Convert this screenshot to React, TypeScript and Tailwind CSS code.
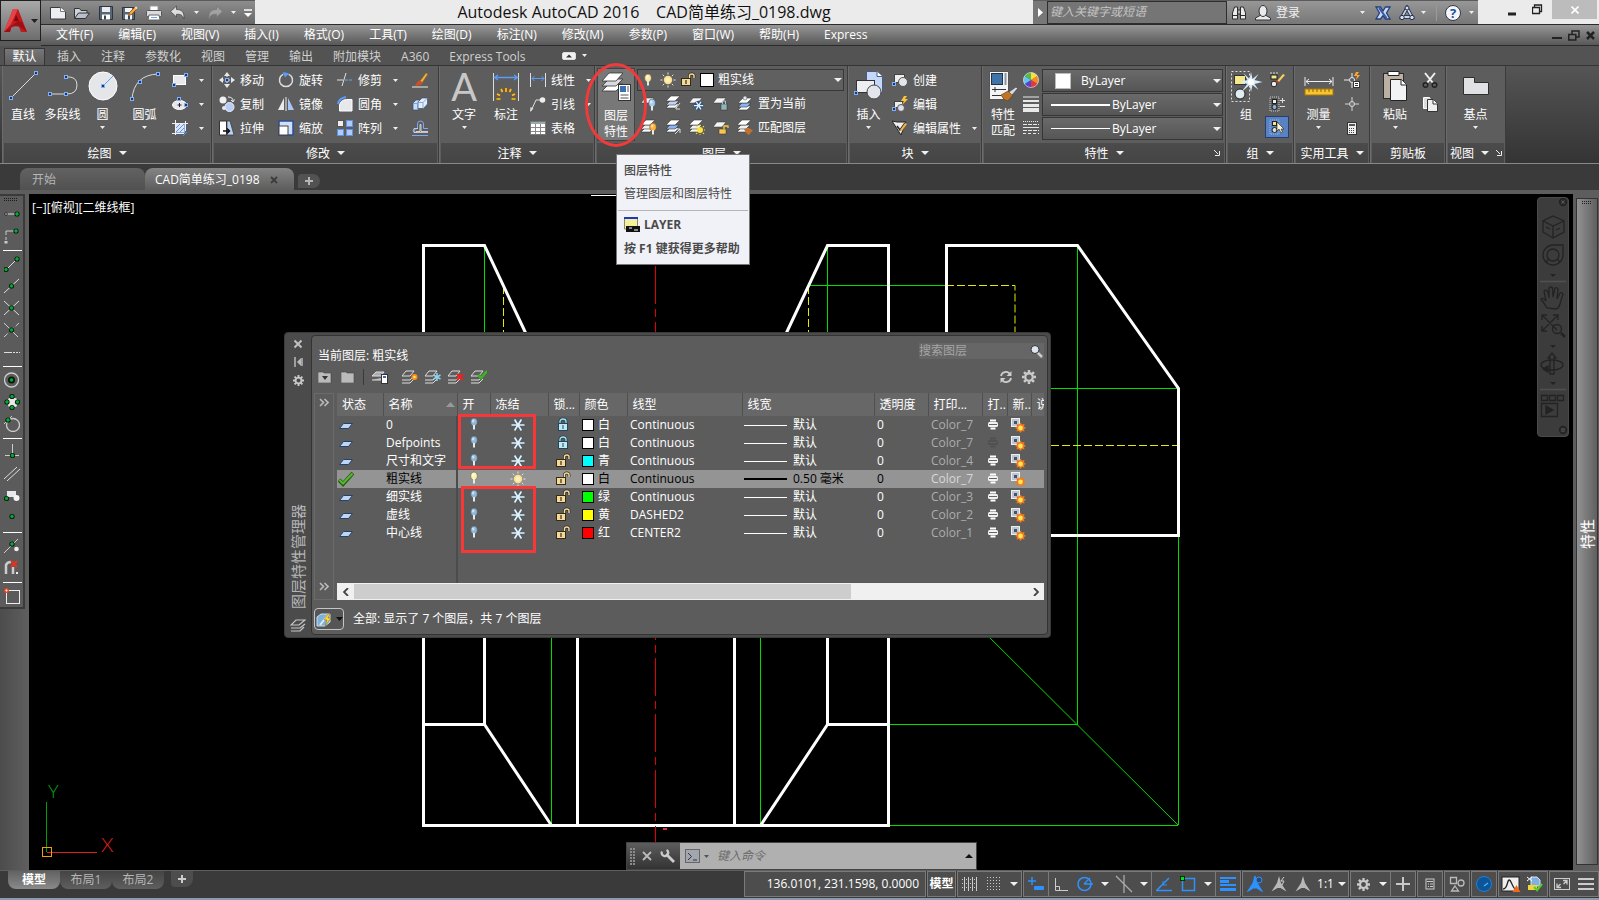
import { ReactNode } from "react";
import clsx from "clsx";

type SvgProps = {
  w?: number,
  h?: number,
  className?: string,
  children: ReactNode,
}

const Svg = ({ w = 16, h = 16, className, children }: SvgProps) => (
  <svg width={w} height={h} viewBox={`0 0 ${w} ${h}`} className={clsx("shrink-0", className)} fill="none" aria-hidden="true">
    {children}
  </svg>
);

const Caret = ({ className, small = false }: { className?: string, small?: boolean }) => (
  small
    ? <Svg w={5} h={3} className={className}><path d="M0 0h5L2.5 3z" fill="#eee" /></Svg>
    : <Svg w={8} h={4} className={className}><path d="M0 0h8L4 4z" fill="#f0f0f0" /></Svg>
);

// Small blue grip square
const Grip = ({ x, y }: { x: number, y: number }) => (
  <rect x={x - 1.5} y={y - 1.5} width="3" height="3" fill="#2a3550" stroke="#7fb0ff" />
);

// Green object snap marker
const Snap = ({ x, y }: { x: number, y: number }) => (
  <>
    <circle cx={x} cy={y} r="2.6" fill="#001a08" />
    <circle cx={x} cy={y} r="1.4" fill="#0a3" stroke="#10b040" strokeWidth=".6" />
  </>
);

const Stack = ({ x = 0, y = 0, fill = "#f0f0f0" }: { x?: number, y?: number, fill?: string }) => (
  <g transform={`translate(${x} ${y})`} stroke="#3a3a3a" strokeWidth=".6">
    <path d="M0 13h9l4-4H4z" fill="#fafafa" />
    <path d="M0 10h9l4-4H4z" fill={fill} />
    <path d="M0 6h9l5-5H5z" fill="#fff" />
  </g>
);

const Sheet = ({ fill = "#f4f4f4" }: { fill?: string }) => (
  <path d="M0 8h9l4-5H4z" fill={fill} stroke="#333" strokeWidth=".5" />
);

const Bulb = ({ x, y, fill }: { x: number, y: number, fill: string }) => (
  <g transform={`translate(${x} ${y})`}>
    <ellipse rx="3.4" ry="4" fill={fill} stroke="#444" strokeWidth=".5" />
    <ellipse cx="-.8" cy="-1" rx="1.2" ry="1.6" fill="#fff" opacity=".6" />
    <path d="M-1 3h2v4.500h-2z" fill="#e8e8e8" />
  </g>
);

const flakePath = "M1.500 8h13M4.600 2.500l6.800 11M11.400 2.500l-6.800 11";
const raysPath = "M8 .5v2M8 13.5v2M.5 8h2M13.5 8h2M2.7 2.7l1.5 1.5M11.8 11.8l1.5 1.5M2.7 13.3l1.5-1.5M11.8 4.2l1.5-1.5";

const Flake = () => (
  <Svg>
    <path d={flakePath} stroke="#3f5c70" strokeWidth="3" opacity=".5" />
    <path d={flakePath} stroke="#dff2fd" strokeWidth="1.700" />
  </Svg>
);

const Sun = () => (
  <Svg>
    <circle cx="8" cy="8" r="4.2" fill="#ffe08a" />
    <circle cx="8" cy="8" r="2.5" fill="#fff0bf" />
    <path d={raysPath} stroke="#ece6d0" />
  </Svg>
);

const LockOpen = () => (
  <Svg>
    <path d="M9.5 7V4q0-2 2.3-2T14 4v2" stroke="#332b18" strokeWidth="2.8" />
    <path d="M9.5 7V4q0-2 2.3-2T14 4v2" stroke="#f7dfa6" strokeWidth="1.4" />
    <rect x="1.5" y="6.5" width="9" height="7" fill="#f5d99a" stroke="#332b18" />
    <path d="M6 8v4" stroke="#332b18" strokeWidth="1.2" />
  </Svg>
);

const LockClosed = () => (
  <Svg>
    <path d="M5 7V4.500q0-2.500 3-2.500t3 2.500V7" stroke="#204858" strokeWidth="3" />
    <path d="M5 7V4.500q0-2.500 3-2.500t3 2.500V7" stroke="#a8dcec" strokeWidth="1.300" />
    <rect x="3.500" y="6.500" width="9" height="7" fill="#bfe9f5" stroke="#204858" />
    <path d="M8 8v4" stroke="#204858" />
  </Svg>
);

type ButtonProps = {
  icon: ReactNode,
  label: string,
  className: string,
  second?: string,
  arrow?: boolean,
}

const BigButton = ({ icon, label, second, arrow, className }: ButtonProps) => (
  <button className={clsx("flex flex-col items-center h-[73px] mt-0.5 shrink-0", className)}>
    <span className="h-9 flex items-center justify-center">{icon}</span>
    <span className={second ? "leading-[17px] pt-0.5" : "leading-[22px]"}>{label}</span>
    {second && <span className="leading-4">{second}</span>}
    {arrow && <Caret small />}
  </button>
);

const SmallButton = ({ icon, label, arrow }: { icon: ReactNode, label?: string, arrow?: boolean }) => (
  <button className="flex items-center h-6 gap-[5px] whitespace-nowrap" aria-label={label ? undefined : "tool"}>
    {icon}
    {label && <span className="pt-0.5">{label}</span>}
    {arrow && <Caret small className="ml-1.5" />}
  </button>
);

const Column = ({ className, children }: { className?: string, children: ReactNode }) => (
  <div className={clsx("flex flex-col pt-0.5 shrink-0", className)}>{children}</div>
);

type PanelProps = {
  title: string,
  className: string,
  arrow?: boolean,
  launcher?: boolean,
  children: ReactNode,
}

const Panel = ({ title, className, arrow = true, launcher, children }: PanelProps) => (
  <section className={clsx("flex flex-col shrink-0 bg-[#5d5d5d] border-l border-l-[#6c6c6c] border-r border-r-[#3c3c3c]", className)}>
    <div className="flex h-[79px]">{children}</div>
    <div className="flex flex-1 items-center justify-center gap-[7px] bg-linear-to-b from-[#4b4b4b] to-[#454545] mx-px relative">
      <span className="pt-0.5">{title}</span>
      {arrow && <Caret />}
      {launcher && (
        <Svg w={6} h={6} className={title === "视图" ? "ml-0" : "absolute right-1"}>
          <path d="M0 0l4 4M5.500 1v4.500H1" stroke="#eee" />
        </Svg>
      )}
    </div>
  </section>
);

/* ---------- Title bar ---------- */

const Divider = () => <span className="w-px h-4 bg-[#9a9a9a]" />;

const QuickAccess = () => (
  <div className="flex items-center w-[214px] pl-[9px] shrink-0 bg-linear-to-b from-[#8d8d8d] to-[#686868] border-t border-[#5b5b5b]">
    <button aria-label="新建" className="mr-2"><Svg>
      <path d="M.5 2.500h10l5 4v7.500H.5z" fill="#eceef2" stroke="#3b3b3b" /><path d="M10.500 2.500v4h5" fill="#fff" stroke="#777" />
    </Svg></button>
    <button aria-label="打开" className="mr-2"><Svg>
      <path d="M.5 13V3.500h5l1.500 2h6V8" fill="#cfd4dc" stroke="#333" /><path d="M.5 13.500l4-5.500H15.500l-4 5.500z" fill="#b9c0cb" stroke="#333" />
    </Svg></button>
    <button aria-label="保存" className="mr-2"><Svg>
      <path d="M1.500 1.500h13v13h-13z" fill="#5b6675" stroke="#2c3440" /><path d="M4 2h8v5H4z" fill="#e8ebef" /><path d="M4 9.500h8v5H4z" fill="#fff" /><path d="M6 10.500h2v4H6z" fill="#3a4350" />
    </Svg></button>
    <button aria-label="另存为" className="mr-2"><Svg>
      <path d="M.5 2.500h12v12H.5z" fill="#5b6675" stroke="#2c3440" /><path d="M3 3h7v4H3zM3 9.500h7v5H3z" fill="#f1f3f5" /><path d="M6 10.500h2v4H6z" fill="#3a4350" />
      <path d="M6.500 10.500l1-3 6-6 2 2-6 6z" fill="#f4a63a" stroke="#7b3d10" strokeWidth=".7" /><path d="M12.500 2.500l2 2 1.200-1.500-1.700-1.700z" fill="#e7e2da" />
    </Svg></button>
    <button aria-label="打印" className="mr-2"><Svg>
      <path d="M4 1h8v5H4z" fill="#fff" stroke="#999" /><rect x=".5" y="5.500" width="15" height="6" rx="1" fill="#d9dadd" stroke="#555" /><path d="M3 10h10l1 5H2z" fill="#fff" stroke="#666" /><path d="M5 12.500h6" stroke="#6ea3e8" />
    </Svg></button>
    <button aria-label="放弃" className="mr-2"><Svg>
      <path d="M.5 6.500L6.500 1v3.500c5 0 8 2 7.500 9.500-1.500-4-3.500-5-7.500-4.700V12z" fill="#dcdcdc" stroke="#4a4a4a" strokeWidth=".8" />
    </Svg></button>
    <Caret small className="mr-2" />
    <button aria-label="重做" className="mr-2"><Svg>
      <path d="M15.500 6.500L9.500 1v3.500c-5 0-8 2-7.500 9.500 1.500-4 3.500-5 7.500-4.700V12z" fill="#a2a2a2" stroke="#787878" strokeWidth=".8" />
    </Svg></button>
    <Caret small className="mr-2" />
    <Svg w={8} h={8}><path d="M0 1h8" stroke="#fff" strokeWidth="1.500" /><path d="M0 4h8L4 8z" fill="#fff" /></Svg>
  </div>
);

const InfoCenter = () => (
  <div className="flex items-stretch w-[445px] shrink-0 bg-linear-to-b from-[#979797] to-[#777] border-t border-[#5b5b5b]">
    <button aria-label="折叠" className="w-3.5 flex items-center justify-center bg-[#777]">
      <Svg w={5} h={9}><path d="M0 0l5 4.500L0 9z" fill="#fff" /></Svg>
    </button>
    <input
      aria-label="搜索"
      placeholder="键入关键字或短语"
      className="w-[180px] px-0.5 pb-0.5 leading-4 italic bg-[#757575] border border-[#2e2e2e] placeholder:text-[#c4c4c4] outline-none"
    />
    <div className="flex flex-1 items-center pl-1">
      <Svg w={16} h={16} className="mr-2">
        <path d="M3.500 2h3v12h-5V8zM12.500 2h-3v12h5V8z" fill="#ececec" stroke="#2c2c2c" /><path d="M6.500 5h3v4h-3zM1.500 10.500h5M9.500 10.500h5" fill="#aaa" stroke="#2c2c2c" />
      </Svg>
      <button className="flex items-center gap-[5px] text-[#f2f2f2]">
        <Svg w={16} h={16}>
          <path d="M.5 15v-2l4.500-2.500h6l4.500 2.500v2z" fill="#e8eaee" stroke="#333" /><ellipse cx="8" cy="6" rx="4" ry="5.500" fill="#e8eaee" stroke="#333" />
        </Svg>
        登录
      </button>
      <Caret small className="ml-auto mr-2.5" />
      <Svg w={16} h={16} className="mr-2">
        <path d="M1 2h4.500L8 6l2.500-4H15L11.500 8 15 14h-4.500L8 10.500 5.500 14H1l3.500-6z" fill="#c9d8f5" stroke="#24407c" strokeWidth="1.300" /><path d="M4 3l7.500 10" stroke="#36559c" strokeWidth="2" />
      </Svg>
      <Svg w={16} h={16} className="mr-1.5">
        <path d="M8 3l5 9H3z" stroke="#202c48" strokeWidth="3.500" /><path d="M8 3l5 9H3z" stroke="#c8d3ea" strokeWidth="1.800" />
        <g fill="#d5def0" stroke="#202c48"><circle cx="8" cy="3" r="2" /><circle cx="3" cy="12.500" r="2.200" /><circle cx="13" cy="12.500" r="2.200" /></g>
      </Svg>
      <Caret small className="mr-2.5" />
      <Divider />
      <button aria-label="帮助" className="ml-2 mr-2 size-4 rounded-full bg-[#f4f6fa] border border-[#33394a] text-[#1e4fa8] font-bold text-[13px] leading-[14px]">?</button>
      <Caret small className="mr-1" />
    </div>
  </div>
);

const menus = ["文件(F)", "编辑(E)", "视图(V)", "插入(I)", "格式(O)", "工具(T)", "绘图(D)", "标注(N)", "修改(M)", "参数(P)", "窗口(W)", "帮助(H)", "Express"];

const Header = () => (
  <header className="flex h-[46px] shrink-0 bg-[#555]">
    <div className="flex flex-col w-[41px] shrink-0 bg-[#5a5a5a]">
      <button aria-label="应用程序" className="h-[41px] w-[41px] flex items-center justify-center gap-0.5 border border-[#1f1f1f] bg-linear-to-b from-[#a9a9a9] to-[#6d6d6d]">
        <Svg w={26} h={28}>
          <path d="M10 2h5l9 23h-6l-2-5q-4-2-8 1l-1 4H1z" fill="#c0191e" />
          <path d="M10 2l5 0-7 15-7 8z" fill="#e2444a" />
          <path d="M1 25l14-11 4 1 5 10-8-6q-4-1-8 1l-1 5z" fill="#9e0f14" />
          <path d="M13 8l3 6h-5z" fill="#7e0a0e" />
        </Svg>
        <Svg w={7} h={4}><path d="M0 0h7L3.500 4z" fill="#222" /></Svg>
      </button>
    </div>
    <div className="flex flex-col flex-1 min-w-0">
      <div className="flex h-6 bg-[#ebebeb]">
        <QuickAccess />
        <h1 className="flex-1 text-center text-[16px] leading-[25px] text-[#111] whitespace-pre">{"Autodesk AutoCAD 2016    CAD简单练习_0198.dwg"}</h1>
        <InfoCenter />
        <div className="flex w-[121px] shrink-0 items-start">
          <button aria-label="最小化" className="w-[68px] h-5 pl-[30px] pt-2"><Svg w={8} h={4}><path d="M0 2h8" stroke="#222" strokeWidth="3" /></Svg></button>
          <button aria-label="还原" className="absolute right-[56px] top-1"><Svg w={11} h={11}><path d="M.5 3.500h7v6h-7zM2.500 3V1h7v6.500H8" stroke="#222" strokeWidth="1.300" /></Svg></button>
          <button aria-label="关闭" className="ml-1.5 w-[45px] h-[19px] bg-[#bcbcbc] flex items-center justify-center"><Svg w={8} h={8}><path d="M.5 .5l7 7M7.500 .5l-7 7" stroke="#fff" strokeWidth="1.600" /></Svg></button>
        </div>
      </div>
      <nav className="flex items-center h-[22px] pl-[15px] gap-[25px] border-t border-b border-[#2b2b2b] bg-linear-to-b from-[#979797] to-[#585858]">
        {menus.map((m) => <button key={m} className="whitespace-nowrap">{m}</button>)}
        <div className="ml-auto flex items-center gap-1.5 pr-1">
          <Svg w={10} h={10}><path d="M0 8h10" stroke="#222" strokeWidth="2" /></Svg>
          <Svg w={12} h={11}><path d="M.8 4.500h7v5.500h-7zM4 4V1h7v6H8" stroke="#222" strokeWidth="1.500" /></Svg>
          <Svg w={9} h={9}><path d="M1 1l7 7M8 1L1 8" stroke="#222" strokeWidth="2.500" /></Svg>
        </div>
      </nav>
    </div>
  </header>
);

/* ---------- Ribbon ---------- */

const ribbonTabs = ["插入", "注释", "参数化", "视图", "管理", "输出", "附加模块", "A360", "Express Tools"];

const RibbonTabs = () => (
  <div className="flex h-5 shrink-0 bg-[#535353] border-b border-[#353535] text-[#d0d0d0]">
    <button className="ml-1 mt-0.5 w-[41px] bg-linear-to-b from-[#777] to-[#5d5d5d] border border-b-0 border-[#353535] text-white leading-4">默认</button>
    <div className="flex items-center gap-5 pl-3 pt-0.5">
      {ribbonTabs.map((t) => <button key={t} className="whitespace-nowrap">{t}</button>)}
    </div>
    <button aria-label="最小化功能区" className="ml-9 flex items-center gap-1.5">
      <Svg w={14} h={8}><rect x=".5" y=".5" width="13" height="7" rx="1.500" fill="#f2f2f2" stroke="#ddd" /><path d="M4 5.500h6L7 2.500z" fill="#333" /></Svg>
      <Caret small />
    </button>
  </div>
);

const DrawPanel = () => (
  <Panel title="绘图" className="w-[210px] ml-0.5">
    <BigButton label="直线" className="w-[40px]" icon={<Svg w={30} h={30}><path d="M3 27L28 2" stroke="#dcdcdc" /><Grip x={3} y={27} /><Grip x={28} y={2} /></Svg>} />
    <BigButton label="多段线" className="w-[39px]" icon={<Svg w={32} h={30}><path d="M3 23h17q10 0 10-9T19 6" stroke="#dcdcdc" /><Grip x={3} y={23} /><Grip x={19} y={23} /><Grip x={19} y={6} /></Svg>} />
    <BigButton label="圆" arrow className="w-[41px]" icon={<Svg w={30} h={30}><circle cx="15" cy="15" r="14" fill="#e4e6ea" stroke="#fff" /><path d="M15 15L25 5" stroke="#5a9cf8" /><Grip x={15} y={15} /></Svg>} />
    <BigButton label="圆弧" arrow className="w-[43px]" icon={<Svg w={32} h={30}><path d="M3 28Q5 4 29 3" stroke="#dcdcdc" /><Grip x={3} y={28} /><Grip x={11} y={11} /><Grip x={29} y={3} /></Svg>} />
    <Column className="ml-1.5">
      <SmallButton arrow icon={<Svg><rect x="1.500" y="3.500" width="12" height="9" fill="#e6e8ec" stroke="#fff" /><Grip x={2} y={13} /><Grip x={14} y={3} /></Svg>} />
      <SmallButton arrow icon={<Svg><ellipse cx="7.500" cy="9" rx="7" ry="4.500" fill="#e6e8ec" stroke="#fff" /><path d="M7.500 7v4M5.500 9h4" stroke="#222" /><Grip x={7} y={3} /><Grip x={14} y={9} /></Svg>} />
      <SmallButton arrow icon={<Svg><rect x="3.500" y="3.500" width="9" height="9" fill="#dfe8f8" stroke="#7fb0ff" /><path d="M4 8l4-4M4 12l8-8M8 12l4-4M11 16l4-4" stroke="#5a90e8" /><path d="M0 3.500h16M3.500 0v15M0 13.500h12M13.500 1v10" stroke="#f0f0f0" /></Svg>} />
    </Column>
  </Panel>
);

const ModifyPanel = () => (
  <Panel title="修改" className="w-[227px]">
    <Column className="pl-1.5 w-[65px]">
      <SmallButton label="移动" icon={<Svg><path d="M8 0l3 4H5zM8 16l3-4H5zM0 8l4-3v6zM16 8l-4-3v6z" fill="#e8e8e8" /><path d="M8 3v10M3 8h10" stroke="#e8e8e8" strokeDasharray="2 1" /><Grip x={8} y={8} /></Svg>} />
      <SmallButton label="复制" icon={<Svg><circle cx="4" cy="4" r="3.500" fill="#eef0f4" /><circle cx="5" cy="12" r="2" fill="#e6e8ec" /><circle cx="10.500" cy="11" r="4.500" fill="#b8cdf4" stroke="#eef" /><path d="M9 1q5 0 5 4M12 4l2 2 1.500-2.500" stroke="#eee" /></Svg>} />
      <SmallButton label="拉伸" icon={<Svg><path d="M.5 1h7v14h-7z" fill="#fff" stroke="#333" /><path d="M8 1h3l4 14H8z" fill="#b9d2f8" stroke="#333" strokeWidth=".7" /><path d="M4 11h6M8 8.500L10.500 11 8 13.500" stroke="#111" strokeWidth="1.500" /></Svg>} />
    </Column>
    <Column className="w-[59px]">
      <SmallButton label="旋转" icon={<Svg><path d="M5 2.300A6.500 6.500 0 1 0 11 2.300" stroke="#ddd" strokeWidth="1.500" /><path d="M5 2.300Q8 .5 11 3" stroke="#5a9cf8" strokeWidth="1.500" /><path d="M5 0l6 1.500-4 4z" fill="#5a9cf8" /></Svg>} />
      <SmallButton label="镜像" icon={<Svg><path d="M6 2v12H0z" fill="#e9ebef" /><path d="M10 2v12h6z" fill="#a9c6f7" /><path d="M8 1v14" stroke="#eee" /></Svg>} />
      <SmallButton label="缩放" icon={<Svg><rect x="1" y="1" width="14" height="14" fill="#cfdffa" stroke="#2c4e91" strokeWidth="1.500" /><rect x="1" y="6" width="9" height="9" fill="#fff" stroke="#444" /></Svg>} />
    </Column>
    <Column className="w-[75px]">
      <SmallButton label="修剪" arrow icon={<Svg><path d="M0 8h6M5 14l4-13" stroke="#e0e0e0" /><path d="M8 8h8" stroke="#6aa4ff" strokeDasharray="3 1" /></Svg>} />
      <SmallButton label="圆角" arrow icon={<Svg><path d="M2.500 15V9q1-5 7-5.500h5.500V15z" fill="#e6e8ec" stroke="#fff" /><path d="M1 8q1-6 8-7" stroke="#5a9cf8" strokeWidth="2" /></Svg>} />
      <SmallButton label="阵列" arrow icon={<Svg><rect x=".5" y=".5" width="6" height="6" fill="#eee" stroke="#555" /><rect x="9.500" y=".5" width="6" height="6" fill="#aecbfb" stroke="#5f92e6" /><rect x=".5" y="9.500" width="6" height="6" fill="#aecbfb" stroke="#5f92e6" /><rect x="9.500" y="9.500" width="6" height="6" fill="#aecbfb" stroke="#5f92e6" /></Svg>} />
    </Column>
    <Column>
      <SmallButton icon={<Svg><path d="M0 15h16" stroke="#eee" /><path d="M8 9l6-8 2 1-6 9z" fill="#f2b23c" stroke="#80511a" strokeWidth=".5" /><path d="M8 8l3 3q-2 3-8 3 2-5 5-6z" fill="#c8502a" /></Svg>} />
      <SmallButton icon={<Svg><path d="M1 7l3-3h4v7l-2 3H1z" fill="#c7dbfb" stroke="#3b4e70" strokeWidth=".7" /><path d="M6 6l4-4h5.500v6l-4 4.500H6z" fill="#e3ecfb" stroke="#3b4e70" strokeWidth=".7" /><path d="M1 7.500h4.500V14M6 6.500h5v6M11 6.500l4-4" stroke="#6f97d8" strokeWidth=".8" /></Svg>} />
      <SmallButton icon={<Svg><path d="M0 15.500h16" stroke="#77a9ff" /><path d="M2.500 13V10.500q0-2 2.500-2h.5V4q0-3 3-3t3 3v4.500H16" stroke="#77a9ff" /><path d="M16 12.500H2q-1.500-2 0-4h4" stroke="#ddd" strokeWidth=".8" /><path d="M4 13v-1.500h4V4.500h1v7h7" stroke="#eee" strokeWidth=".8" /></Svg>} />
    </Column>
  </Panel>
);

const AnnotatePanel = () => (
  <Panel title="注释" className="w-[156px]">
    <BigButton label="文字" arrow className="w-[48px]" icon={<span className="font-[Lato] text-[38px] leading-9 text-[#c8c8c8]">A</span>} />
    <BigButton label="标注" className="w-[36px]" icon={
      <Svg w={28} h={30}>
        <path d="M1.500 2v28M26.500 2v28" stroke="#ddd" /><path d="M3 6.500h22M6 4L2.500 6.500 6 9M22 4l3.500 2.500L22 9" stroke="#5a9cf8" strokeWidth="1.300" />
        <path d="M14 17v4M9 18l1.500 3M19 18l-1.500 3M5 23l3 1.500M23 23l-3 1.500M4.500 28h4M19.500 28h4" stroke="#8a5a10" strokeWidth="3" /><path d="M14 17v4M9 18l1.500 3M19 18l-1.500 3M5 23l3 1.500M23 23l-3 1.500M4.500 28h4M19.500 28h4" stroke="#f8c02e" strokeWidth="1.700" />
      </Svg>
    } />
    <Column className="ml-1.5">
      <SmallButton label="线性" arrow icon={<Svg><path d="M.5 1v14M15.500 1v14" stroke="#e0e0e0" /><path d="M2 6.500h12M4.500 4L2 6.500 4.500 9M11.500 4L14 6.500 11.500 9" stroke="#5a9cf8" /></Svg>} />
      <SmallButton label="引线" arrow icon={<Svg><path d="M1 15L6 4h5" stroke="#ddd" /><circle cx="12.500" cy="4" r="2.800" fill="#eee" /><path d="M0 16l.5-5 3 1.500z" fill="#ddd" /></Svg>} />
      <SmallButton label="表格" icon={<Svg><rect x=".5" y="1.500" width="15" height="13" fill="#fff" stroke="#777" /><path d="M1 2h14v2H1z" fill="#9aa" /><path d="M1 7.500h14M1 11.500h14M5.500 4v10M10.500 4v10" stroke="#888" /></Svg>} />
    </Column>
  </Panel>
);

const LayerPanel = () => (
  <Panel title="图层" className="w-[253px]">
    <BigButton label="图层" second="特性" className="w-[38px] ml-px bg-[#787878] border border-[#444]" icon={
      <Svg w={32} h={32}>
        <g stroke="#333" strokeWidth=".8"><path d="M2 20h14l7-7H9z" fill="#fff" /><path d="M2 15h14l7-7H9z" fill="#d8dade" /><path d="M2 10h14l7-8H9z" fill="#fff" /></g>
        <rect x="18.500" y="13.500" width="12" height="16" fill="#fff" stroke="#333" /><path d="M20 15h6v6h-6z" fill="#3a6fb5" /><path d="M28 15v6M20.500 24h8M20.500 27h8" stroke="#555" />
      </Svg>
    } />
    <div className="flex flex-col flex-1 pl-0.5 pt-[3px]">
      <label className="flex items-center h-[22px] mr-[3px] pl-0.5 gap-1 border border-[#383838] bg-[#606060] relative">
        <Svg w={16} h={16}><Bulb x={8} y={6} fill="#ffeba0" /></Svg>
        <Sun />
        <LockOpen />
        <span className="size-3.5 bg-white border border-black shrink-0" />
        <select className="flex-1 appearance-none bg-transparent outline-none" aria-label="图层"><option>粗实线</option></select>
        <Caret className="absolute right-px" />
      </label>
      <div className="flex h-6 items-center gap-2 pl-1">
        <Svg><Sheet /><Bulb x={11} y={8} fill="#a8cdf5" /></Svg>
        <Svg><Stack x={1} fill="#bcd4f8" /><path d="M15 8l-4 5M11 10v4h4" stroke="#ddd" /></Svg>
        <Svg><Sheet /><g transform="translate(4 5) scale(.7)"><circle cx="8" cy="8" r="7" fill="#33517a" /><path d={flakePath} stroke="#dff0ff" strokeWidth="2" /></g></Svg>
        <Svg><Sheet /><rect x="8" y="9" width="6" height="6" fill="#8fb5b8" stroke="#333" strokeWidth=".5" /><path d="M9.500 9V6h3v3" stroke="#a8c8c8" /></Svg>
        <Svg><Stack x={1} y={2} fill="#8ab4f5" /><circle cx="8" cy="3" r="2" fill="#e5eaf2" stroke="#444" strokeWidth=".5" /></Svg>
        <button className="-ml-[3px] pt-0.5">置为当前</button>
      </div>
      <div className="flex h-6 items-center gap-2 pl-1">
        <Svg><Stack /><Bulb x={12} y={8} fill="#ffb23a" /></Svg>
        <Svg><Stack x={1} fill="#8ab4f5" /><path d="M10 15l5-5M11 10h4v4" stroke="#ddd" /></Svg>
        <Svg><Stack /><circle cx="11" cy="11" r="3" fill="#ffe23e" /><g transform="translate(5 5) scale(.75)"><path d={raysPath} stroke="#ffe23e" strokeWidth="1.500" /></g></Svg>
        <Svg><Sheet /><rect x="6" y="10" width="7" height="5" fill="#f7c64a" stroke="#333" strokeWidth=".5" /><path d="M11 10V7h4v2" stroke="#f7c64a" strokeWidth="1.300" /></Svg>
        <Svg><Stack /><path d="M7 10l4-1 5 2-4 5q-3-1-5-6z" fill="#c07030" /></Svg>
        <button className="-ml-[3px] pt-0.5">匹配图层</button>
      </div>
    </div>
  </Panel>
);

const BlockPanel = () => (
  <Panel title="块" className="w-[134px]">
    <BigButton label="插入" arrow className="w-[39px]" icon={
      <Svg w={32} h={32}>
        <path d="M13.500 1.500h11l5 5v16h-16z" fill="#c3d8fa" stroke="#4a5c7c" /><path d="M24 1.500v5h5.500" fill="#fff" stroke="#4a5c7c" />
        <rect x="3.500" y="10.500" width="18" height="12" fill="#eceef2" stroke="#333" /><circle cx="21" cy="22" r="7" fill="#e2e5ea" stroke="#444" /><Grip x={3} y={23} />
      </Svg>
    } />
    <Column className="ml-1">
      <SmallButton label="创建" icon={<Svg><rect x="2.500" y="2.500" width="10" height="8" fill="#eee" stroke="#444" /><circle cx="11" cy="10" r="4.500" fill="#e2e5ea" stroke="#555" /><Grip x={2} y={12} /></Svg>} />
      <SmallButton label="编辑" icon={<Svg><rect x="2.500" y="5.500" width="8" height="6" fill="#eee" stroke="#444" /><circle cx="9" cy="12" r="3.500" fill="#dde" stroke="#555" /><path d="M12 0l-3 5h3l-2 4 6-6h-3l2-3z" fill="#ffc23c" /><Grip x={2} y={13} /></Svg>} />
      <SmallButton label="编辑属性" arrow icon={<Svg><path d="M0 1l5 1h9L9 15z" fill="#eee" stroke="#222" /><path d="M5 6l3 4 5-7" stroke="#222" strokeWidth="1.500" /><path d="M8 10l5-7 2 1-5 7z" fill="#f0b040" /></Svg>} />
    </Column>
  </Panel>
);

const PropertySelect = ({ children, label }: { children?: ReactNode, label: string }) => (
  <label className="flex items-center h-[23px] px-2 relative border border-[#363636] bg-linear-to-b from-[#6a6a6a] to-[#565656]">
    {children}
    <select aria-label={label} className="flex-1 min-w-0 appearance-none bg-transparent outline-none leading-4"><option>ByLayer</option></select>
    <Caret className="absolute right-px" />
  </label>
);

const PropertiesPanel = () => (
  <Panel title="特性" launcher className="w-[244px]">
    <BigButton label="特性" second="匹配" className="w-[40px]" icon={
      <Svg w={32} h={32}>
        <rect x="2.500" y="1.500" width="19" height="28" fill="#f3f4f6" stroke="#555" /><rect x="4.500" y="3.500" width="11" height="11" fill="#3f74a8" stroke="#234" /><path d="M18.500 3v12" stroke="#8a93a0" strokeWidth="2" />
        <path d="M5 19.500h14M5 25.500h9M8 17v5" stroke="#333" /><path d="M14 25l7-4 5 4-5 6q-4 0-7-6z" fill="#c07428" stroke="#5a3210" strokeWidth=".6" /><path d="M22 22l7-5 1.500 1.500L25 25z" fill="#d9dadd" stroke="#444" strokeWidth=".6" />
      </Svg>
    } />
    <Column>
      <SmallButton icon={<Svg>
        <path d="M8 8V.5A7.500 7.500 0 0 1 14.500 4z" fill="#f6e13c" /><path d="M8 8l6.500-4a7.500 7.500 0 0 1 0 8z" fill="#f08a2c" /><path d="M8 8l6.500 4A7.500 7.500 0 0 1 8 15.500z" fill="#e23a3a" />
        <path d="M8 8v7.500A7.500 7.500 0 0 1 1.500 12z" fill="#5a3fd0" /><path d="M8 8l-6.500 4a7.500 7.500 0 0 1 0-8z" fill="#5fc6f2" /><path d="M8 8L1.500 4A7.500 7.500 0 0 1 8 .5z" fill="#58b947" /><circle cx="8" cy="8" r="7.500" stroke="#ddd" strokeWidth=".7" />
      </Svg>} />
      <SmallButton icon={<Svg><path d="M0 1h16" stroke="#e8e8e8" /><path d="M0 5h16" stroke="#e8e8e8" strokeWidth="2" /><path d="M0 9.500h16" stroke="#e8e8e8" strokeWidth="3" /><path d="M0 14h16" stroke="#e8e8e8" strokeWidth="4" /></Svg>} />
      <SmallButton icon={<Svg><path d="M0 1.500h16" stroke="#e8e8e8" strokeDasharray="1 1" /><path d="M0 4.500h16M0 10.500h16" stroke="#e8e8e8" strokeDasharray="4 1" /><path d="M0 7.500h16" stroke="#e8e8e8" /><path d="M0 13.500h16" stroke="#e8e8e8" strokeDasharray="3 2" /></Svg>} />
    </Column>
    <div className="flex flex-col flex-1 gap-px pt-[3px] pl-[3px] pr-0.5">
      <PropertySelect label="颜色"><span className="size-4 bg-white border border-[#bbb] ml-1 mr-2.5 shrink-0" /></PropertySelect>
      <PropertySelect label="线宽"><span className="w-[59px] h-0.5 bg-white mr-0.5 shrink-0" /></PropertySelect>
      <PropertySelect label="线型"><span className="w-[59px] h-px bg-white mr-0.5 shrink-0" /></PropertySelect>
    </div>
  </Panel>
);

const GroupPanel = () => (
  <Panel title="组" className="w-[68px]">
    <BigButton label="组" className="w-[38px]" icon={
      <Svg w={34} h={34}>
        <rect x="2.500" y="2.500" width="18" height="30" stroke="#ddd" strokeDasharray="2 2" /><rect x="5.500" y="6.500" width="11" height="9" fill="#f3e88a" stroke="#333" /><circle cx="11" cy="25" r="5" fill="#dfeef2" stroke="#222" />
        <path d="M22 3l1.500 7 6-5-4 6 8 2-8 2 4 6-6-5L22 23l-1.500-7-9 8 7-9-8-2 8-2-4-7 6 6z" fill="#d5edff" /><circle cx="22" cy="13" r="3" fill="#fff" />
      </Svg>
    } />
    <Column className="items-center">
      <SmallButton icon={<Svg><path d="M1 1h9" stroke="#ddd" strokeDasharray="2 1" /><rect x="2" y="3" width="6" height="4" fill="#f3e88a" stroke="#222" /><circle cx="5" cy="12" r="2.800" fill="#eee" stroke="#222" /><path d="M8 9l6-7 2 1-6 7z" fill="#f3d05a" /><path d="M8 8l2 2-3 1z" fill="#d33" /></Svg>} />
      <SmallButton icon={<Svg><rect x="1" y="1" width="9" height="14" stroke="#ccc" strokeDasharray="1 1" /><rect x="3.500" y="3.500" width="4" height="4" fill="#eee" stroke="#222" /><circle cx="5.500" cy="11" r="2.500" fill="#8ab0d8" stroke="#222" /><path d="M11 4.500h5M13.500 2v5M11 10.500h5" stroke="#ddd" /></Svg>} />
      <button aria-label="组选择" className="flex items-center justify-center h-[22px] w-6 bg-[#5a82c2] border border-[#243f74]">
        <Svg><rect x="1" y="1" width="9" height="14" stroke="#8fc0ff" strokeDasharray="1 1" /><rect x="3.500" y="2.500" width="4" height="4" fill="#f3e88a" stroke="#222" /><circle cx="5.500" cy="11" r="2.500" fill="#ddd" stroke="#222" /><path d="M8 3v9l2-2 2 4 1.500-1-1.500-3h3z" fill="#fff7c0" stroke="#222" strokeWidth=".6" /></Svg>
      </button>
    </Column>
  </Panel>
);

const UtilityPanel = () => (
  <Panel title="实用工具" className="w-[76px]">
    <BigButton label="测量" arrow className="w-[47px]" icon={
      <Svg w={30} h={20}>
        <path d="M1 1v9M29 1v9M2 5.500h26M5 3L2 5.500 5 8M25 3l3 2.500L25 8" stroke="#eee" /><rect x="1" y="13" width="28" height="6" fill="#f6c531" stroke="#a87908" /><path d="M5 13v3M9 13v3M13 13v3M17 13v3M21 13v3M25 13v3" stroke="#8a6105" />
      </Svg>
    } />
    <Column className="ml-0.5">
      <SmallButton icon={<Svg><path d="M0 8h5M8 1v4M8 11v5" stroke="#eee" /><circle cx="8" cy="8" r="2.500" stroke="#eee" /><path d="M12 0l-2 4h3l-1 4 4-5h-3l2-3z" fill="#ffa52e" /><rect x="9.500" y="9.500" width="6" height="6" fill="#fff" stroke="#333" /><path d="M11 11.500h3M11 13.500h3" stroke="#333" /></Svg>} />
      <SmallButton icon={<Svg><path d="M1 8h14M8 1v14" stroke="#d5d5d5" /><circle cx="8" cy="8" r="2.500" fill="#777" stroke="#d5d5d5" /></Svg>} />
      <SmallButton icon={<Svg><rect x="3.500" y="2.500" width="9" height="12" fill="#eee" stroke="#333" /><path d="M5 4h6v2H5z" fill="#555" /><path d="M5 8.500h6M5 10.500h6M5 12.500h6" stroke="#444" strokeDasharray="1 1" /></Svg>} />
    </Column>
  </Panel>
);

const ClipboardPanel = () => (
  <Panel title="剪贴板" arrow={false} className="w-[76px]">
    <BigButton label="粘贴" arrow className="w-[48px]" icon={
      <Svg w={26} h={32}>
        <rect x="1.500" y="3.500" width="20" height="25" fill="#bbb0a4" stroke="#2e2a26" /><path d="M6 1.500h11v4H6z" fill="#fff" stroke="#222" />
        <path d="M8.500 9.500h11l5 5v16h-16z" fill="#f2f3f5" stroke="#222" /><path d="M19 9.500v5.500h5.500" fill="#fff" stroke="#222" />
      </Svg>
    } />
    <Column className="ml-[3px]">
      <SmallButton icon={<Svg><path d="M3 1l8 10M13 1L5 11" stroke="#f0f0f0" strokeWidth="2" /><circle cx="3.500" cy="13" r="2.300" stroke="#222" strokeWidth="1.500" /><circle cx="12.500" cy="13" r="2.300" stroke="#222" strokeWidth="1.500" /></Svg>} />
      <SmallButton icon={<Svg><path d="M1.500 1.500h6l1 2v9h-7z" fill="#ddd" stroke="#fff" /><path d="M5.500 3.500h6l4 4v8h-10z" fill="#eee" stroke="#333" /><path d="M11 3.500V8h4.500" fill="#fff" stroke="#333" /></Svg>} />
    </Column>
  </Panel>
);

const ViewPanel = () => (
  <Panel title="视图" launcher className="w-[60px]">
    <BigButton label="基点" arrow className="w-[57px]" icon={<Svg w={28} h={20}><path d="M1.500 1.500h11v5h14v12h-25z" fill="#dfe1e5" stroke="#2e2e2e" /></Svg>} />
  </Panel>
);

const Ribbon = () => (
  <div className="flex h-[98px] shrink-0 bg-linear-to-b from-[#555] to-[#343434] border-b border-b-[#888]">
    <DrawPanel />
    <ModifyPanel />
    <AnnotatePanel />
    <LayerPanel />
    <BlockPanel />
    <PropertiesPanel />
    <GroupPanel />
    <UtilityPanel />
    <ClipboardPanel />
    <ViewPanel />
  </div>
);

const FileTabs = () => (
  <div className="flex items-end h-[30px] shrink-0 bg-[#3a3a3a] border-b-4 border-[#5d5d5d] pl-5">
    <button className="h-[22px] w-[125px] pl-3 pt-0.5 text-left text-[#b5b5b5] rounded-t-lg bg-linear-to-b from-[#626262] to-[#515151]">开始</button>
    <button className="h-[22px] w-[149px] pl-2.5 pt-0.5 flex items-center rounded-t-lg bg-linear-to-b from-[#858585] to-[#5d5d5d] whitespace-nowrap">
      CAD简单练习_0198
      <Svg w={8} h={8} className="ml-2.5"><path d="M1 1l6 6M7 1L1 7" stroke="#3c3c3c" strokeWidth="1.800" /></Svg>
    </button>
    <button aria-label="新图形" className="ml-1 mb-0.5 h-3.5 w-[22px] flex items-center justify-center bg-[#525252] rounded-tl rounded-br-lg rounded-tr-lg">
      <Svg w={8} h={8}><path d="M4 0v8M0 4h8" stroke="#b5b5b5" strokeWidth="2" /></Svg>
    </button>
  </div>
);

/* ---------- Object snap toolbar ---------- */

const snapGroups: ReactNode[][] = [
  [
    <Svg><path d="M3 8h10" stroke="#ddd" /><circle cx="2" cy="8" r="1.300" fill="#eee" stroke="#222" /><Snap x={13} y={8} /></Svg>,
    <Svg><path d="M12 3H2v4" stroke="#ccc" /><path d="M2 9v3" stroke="#ccc" /><path d="M.5 13h3v2.500h-3z" fill="#ccc" /><Snap x={12} y={3} /></Svg>,
  ],
  [
    <Svg><path d="M2 14L13 3" stroke="#ddd" /><Snap x={2} y={13.500} /><Snap x={13} y={3} /></Svg>,
    <Svg><path d="M0 15L15 1" stroke="#ddd" /><Snap x={7.500} y={8} /></Svg>,
    <Svg><path d="M0 1l15 14M0 15L15 1" stroke="#ddd" /><Snap x={7.500} y={8} /></Svg>,
    <Svg><path d="M0 1l14 14" stroke="#ccc" /><path d="M0 15L15 1" stroke="#ccc" strokeDasharray="5 3" /><Snap x={7.500} y={8} /></Svg>,
    <Svg><path d="M0 8.500h8" stroke="#ddd" /><path d="M9 8.500h7" stroke="#ddd" strokeDasharray="2 1" /></Svg>,
  ],
  [
    <Svg><circle cx="7.500" cy="8" r="7" stroke="#ccc" strokeWidth="1.300" /><circle cx="7.500" cy="8" r="3.500" fill="#001a08" /><Snap x={7.500} y={8} /></Svg>,
    <Svg><rect x="4" y="4" width="9" height="9" rx="2" fill="#e8e8e8" /><Snap x={8} y={2.500} /><Snap x={3} y={8} /><Snap x={13.500} y={8} /><Snap x={8} y={13.500} /></Svg>,
    <Svg><circle cx="9" cy="9" r="6.500" stroke="#ccc" strokeWidth="1.300" /><path d="M0 8L8 0" stroke="#ccc" /><Snap x={4} y={4} /></Svg>,
  ],
  [
    <Svg><path d="M8.500 0v12M1 11.500h14" stroke="#ccc" /><Snap x={8.500} y={11.500} /></Svg>,
    <Svg><path d="M0 13L13 1M3 15L16 3" stroke="#ddd" /></Svg>,
    <Svg><path d="M3 3h9v6H3z" fill="#e8e8ec" /><circle cx="12.500" cy="10" r="3" fill="#f4f4f4" /><Snap x={2.500} y={10.500} /></Svg>,
    <Svg><Snap x={8} y={6.500} /></Svg>,
  ],
  [
    <Svg><path d="M0 15L14 1" stroke="#ccc" /><Snap x={8} y={6} /><circle cx="12.500" cy="11" r="2.300" fill="#eee" /></Svg>,
    <Svg><path d="M2 14V5q1-3 5-3M9 14V7" stroke="#ccc" strokeWidth="2.500" /><path d="M7 1l6 6M13 1L7 7" stroke="#e8321e" strokeWidth="2" /><path d="M12 12h2v2h-2z" fill="#eee" /></Svg>,
  ],
  [
    <Svg><rect x="2.500" y="2.500" width="13" height="13" stroke="#eee" /><circle cx="2.500" cy="2.500" r="2.500" fill="#e8441e" /><circle cx="2.500" cy="2.500" r="1" fill="#fff" /></Svg>,
  ],
];

const SnapToolbar = () => (
  <aside className="w-[29px] shrink-0 bg-linear-to-r from-[#4c4c4c] to-[#5f5f5f]">
    <div className="w-[25px] border-2 border-l-0 border-[#3a3a3a] bg-[#5b5b5b]">
      <div className="h-[7px] flex items-center pl-1"><Svg w={14} h={4}><path d="M0 .5h14M0 2.500h14" stroke="#1c1c1c" strokeDasharray="1 1" /></Svg></div>
      {snapGroups.map((group, g) => (
        <div key={g}>
          {g > 0 && <div className="h-1.5 flex items-center"><span className="ml-[3px] h-px w-[19px] bg-white" /></div>}
          {group.map((icon, i) => (
            <button key={i} aria-label={`捕捉 ${g + 1}-${i + 1}`} className="h-[22px] w-full pl-1 flex items-center">{icon}</button>
          ))}
        </div>
      ))}
    </div>
  </aside>
);

/* ---------- Drawing ---------- */

// Model geometry is given in window coordinates
const Drawing = () => (
  <svg className="absolute inset-0 size-full" fill="none" aria-hidden="true">
    <g transform="translate(-29 -194)">
      <g stroke="#00dc00">
        <path d="M484.500 246v90M827.500 246v100M551.500 620v205M760.500 620v205M808 285.500h138M1040 388.500h138M1077.500 246v479M888 724.500h189M970 618l208 207M1178.500 536v289M888 825.500h290" />
      </g>
      <g stroke="#e8e800" strokeDasharray="8 3">
        <path d="M503.500 286v60M808.500 286v60M946 285.500h69v60M1040 445.500h138" />
      </g>
      <g stroke="#fff" strokeWidth="3">
        <path d="M528 338L484.500 245.500H423.500V825.500H888.500V245.500H827.500L784 338" />
        <path d="M423.500 724.500h61l67 101M484.500 620v105M888.500 724.500h-61l-67 101M827.500 620v105M577.500 620v205M734.500 620v205" />
        <path d="M946.500 400V245.500h131L1178.500 388.500v147H1040" />
      </g>
      <path d="M591 195.500h26" stroke="#fff" />
      <path d="M655.500 266v586" stroke="#e00000" strokeDasharray="38 5 8 5" />
      <path d="M663 829h4" stroke="#e03030" strokeWidth="2" />
      <path d="M46.500 802v50" stroke="#00a000" />
      <path d="M47 852.500h50" stroke="#e02020" />
      <rect x="42.500" y="847.500" width="9" height="9" stroke="#f0a000" />
      <text x="48" y="798" fill="#00a818" className="font-[Lato] font-light text-[18px]">Y</text>
      <text x="101" y="852" fill="#e02020" className="font-[Lato] font-light text-[20px]">X</text>
    </g>
  </svg>
);

const NavBar = () => (
  <div className="absolute right-1 top-[3px] w-8 h-60 rounded bg-[#3c3c3c] border border-[#4a4a4a]">
    <svg width="30" height="238" viewBox="0 0 30 238" fill="none" stroke="#232323" strokeWidth="1.300" aria-hidden="true">
      <circle cx="25" cy="4" r="3.500" fill="#2c2c2c" /><path d="M23.500 2.500l3 3M26.500 2.500l-3 3" stroke="#666" strokeWidth=".8" />
      <path d="M15 18l11 5v11l-11 6-10-6V23zM5 23l10 5 11-5M15 28v12M8 29l4 2M18 32l4-2" />
      <path d="M15 47h10v10a10 10 0 1 1-10-10z" /><circle cx="15" cy="57" r="6" /><path d="M11 61l-3 3M19 61l3 3" />
      <path d="M12 76h6l-3 3zM12 147h6l-3 3zM12 184h6l-3 3z" fill="#232323" stroke="none" />
      <path d="M2 83.500h26M2 191.500h26" stroke="#505050" />
      <path d="M9 110q-3-5-6-9 2-2 5 2L6 93q2-2 4 1l1 6V90q2-2 3.500 0l.5 9 2-9q2-1 3 1l-1 10 3-6q2-1 3 1-2 6-3 10t-4 5z" />
      <path d="M5 118l14 14M19 118L5 132M4 122v-5h5M15 117h5v5M4 128v5h5" /><circle cx="19" cy="131" r="4.500" /><path d="M23 135l4 4" strokeWidth="2.500" />
      <path d="M12 176v-16h-2l4-5 4 5h-2v16z" /><ellipse cx="14" cy="167" rx="11" ry="5" /><path d="M10 168l-5 3 5 3z" fill="#232323" />
      <path d="M3.500 197.500h6v5h-6zM11.500 197.500h6v5h-6zM19.500 197.500h6v5h-6zM3.500 205.500h16v13h-16z" /><path d="M8 208l7 4-7 4z" fill="#232323" />
      <circle cx="25" cy="232" r="3.500" fill="#2c2c2c" /><path d="M23 231h4M23 233h4" stroke="#666" strokeWidth=".8" />
    </svg>
  </div>
);

const CommandLine = () => (
  <div className="absolute left-[597px] bottom-0 flex h-7 w-[351px] border border-[#444]">
    <div className="flex items-center w-[53px] pl-[3px] bg-linear-to-b from-[#5d5d5d] to-[#333]">
      <Svg w={6} h={17}><path d="M1 0v17M4 0v17" stroke="#8a8a8a" strokeWidth="2" strokeDasharray="2 1" /></Svg>
      <button aria-label="关闭" className="ml-1.5"><Svg w={10} h={10}><path d="M1 1l8 8M9 1L1 9" stroke="#bbb" strokeWidth="1.800" /></Svg></button>
      <button aria-label="自定义" className="ml-2"><Svg w={16} h={16}>
        <path d="M6 6l8 8" stroke="#ccc" strokeWidth="2.800" /><path d="M2 3.500A3.200 3.200 0 1 0 6.500 2" stroke="#ccc" strokeWidth="2.200" />
      </Svg></button>
    </div>
    <div className="flex flex-1 items-center pl-[5px] bg-[#b0b0b0]">
      <span className="w-[15px] h-3.5 border border-[#666] bg-[#a2a6ae] flex items-center justify-center">
        <Svg w={11} h={9}><path d="M1 1l3.500 3.500L1 8M6 8h4" stroke="#333" /></Svg>
      </span>
      <Svg w={5} h={3} className="ml-1 mr-2"><path d="M0 0h5L2.500 3z" fill="#555" /></Svg>
      <input aria-label="命令" placeholder="键入命令" className="flex-1 min-w-0 bg-transparent outline-none italic placeholder:text-[#6b6b6b] text-[12px]" />
      <Svg w={8} h={4} className="mr-[3px]"><path d="M0 4h8L4 0z" fill="#111" /></Svg>
    </div>
  </div>
);

/* ---------- Layer properties manager ---------- */

type Layer = {
  name: string,
  color: string,
  colorName: string,
  linetype: string,
  plotStyle: string,
  locked?: boolean,
  noPlot?: boolean,
  current?: boolean,
}

const layers: Layer[] = [
  { name: "0", color: "#ffffff", colorName: "白", linetype: "Continuous", plotStyle: "Color_7", locked: true },
  { name: "Defpoints", color: "#ffffff", colorName: "白", linetype: "Continuous", plotStyle: "Color_7", locked: true, noPlot: true },
  { name: "尺寸和文字", color: "#00ffff", colorName: "青", linetype: "Continuous", plotStyle: "Color_4" },
  { name: "粗实线", color: "#ffffff", colorName: "白", linetype: "Continuous", plotStyle: "Color_7", current: true },
  { name: "细实线", color: "#00ff00", colorName: "绿", linetype: "Continuous", plotStyle: "Color_3" },
  { name: "虚线", color: "#ffff00", colorName: "黄", linetype: "DASHED2", plotStyle: "Color_2" },
  { name: "中心线", color: "#ff0000", colorName: "红", linetype: "CENTER2", plotStyle: "Color_1" },
];

const columns = [
  { title: "状态", width: "w-[46px]" },
  { title: "名称", width: "w-[74px]" },
  { title: "开", width: "w-[33px]" },
  { title: "冻结", width: "w-[58px]" },
  { title: "锁...", width: "w-[31px]" },
  { title: "颜色", width: "w-[48px]" },
  { title: "线型", width: "w-[115px]" },
  { title: "线宽", width: "w-[132px]" },
  { title: "透明度", width: "w-[54px]" },
  { title: "打印...", width: "w-[54px]" },
  { title: "打..", width: "w-[25px]" },
  { title: "新..", width: "w-[24px]" },
  { title: "说", width: "w-[13px]" },
];

const LayerRow = ({ layer }: { layer: Layer }) => (
  <tr className={clsx("h-[18px] leading-[18px]", layer.current && "bg-[#949494] text-black")}>
    <td className="pl-px">
      {layer.current
        ? <Svg><path d="M1 9l4 4L15 2" stroke="#1f5c10" strokeWidth="4" /><path d="M1.500 9L5 12.500 14.500 2.500" stroke="#5cb531" strokeWidth="2.200" /></Svg>
        : <Svg><path d="M1.500 11.500h9l4-5h-9z" fill="#bcd6f5" stroke="#28406c" /></Svg>}
    </td>
    <td className="pl-[3px] border-r-2 border-[#4c4c4c]">{layer.name}</td>
    <td className="pl-2"><Svg><Bulb x={8} y={5} fill={layer.current ? "#fff2b0" : "#8fb8d8"} /></Svg></td>
    <td className="pl-5">{layer.current ? <Sun /> : <Flake />}</td>
    <td className="pl-[7px]">{layer.locked ? <LockClosed /> : <LockOpen />}</td>
    <td className="pl-[3px]">
      <span className="flex items-center gap-1">
        <span className="size-3 border border-black" style={{ background: layer.color }} />
        {layer.colorName}
      </span>
    </td>
    <td className="pl-[3px]">{layer.linetype}</td>
    <td className="pl-0.5">
      <span className="flex items-center gap-1.5">
        <span className={clsx("w-[43px]", layer.current ? "h-0.5 bg-black" : "h-px bg-white")} />
        {layer.current ? "0.50 毫米" : "默认"}
      </span>
    </td>
    <td className="pl-[3px]">0</td>
    <td className={clsx("pl-[3px]", layer.current ? "text-[#d8d8d8]" : "text-[#adadad]")}>{layer.plotStyle}</td>
    <td className="pl-[3px]">
      <Svg className={layer.noPlot ? "opacity-20" : ""}>
        <path d="M5 2.500h6v2H5zM5.500 10.500h5v2h-5z" fill={layer.noPlot ? "#222" : "#fff"} />
        <rect x="3" y="5" width="10" height="5" rx="1.500" fill={layer.noPlot ? "#222" : "#f2f2f2"} /><path d="M4 7.500h8" stroke="#666" />
      </Svg>
    </td>
    <td className="pl-[3px]">
      <Svg><rect x="1.500" y="1.500" width="8" height="8" fill="#bcc6d6" stroke="#eee" /><rect x="4" y="4" width="3" height="3" fill="#456" /><path d="M10.500 5.500l1.500 2 2.500-.5-.5 2.500 2 1.500-2 1 .5 2.500-2.500-.5-1.500 2-1.500-2-2.500.5.500-2.500-2-1 2-1.500-.5-2.500 2.500.5z" fill="#f07a1a" /><circle cx="10.500" cy="11" r="2.400" fill="#ffe35a" /></Svg>
    </td>
    <td />
  </tr>
);

const ChevronPair = () => (
  <Svg w={10} h={9}><path d="M1 1l3.500 3.500L1 8M5.500 1L9 4.500 5.500 8" stroke="#bbb" strokeWidth="1.600" /></Svg>
);

const gearPath = "M8 0v3M8 13v3M0 8h3M13 8h3M2.300 2.300l2.200 2.200M11.500 11.500l2.200 2.200M2.300 13.700l2.200-2.200M11.500 4.500l2.200-2.200";

const Gear = ({ size = 14 }: { size?: number }) => (
  <svg width={size} height={size} viewBox="0 0 16 16" fill="none" stroke="#cacaca" aria-hidden="true">
    <circle cx="8" cy="8" r="4.300" strokeWidth="2.600" /><path d={gearPath} strokeWidth="2.800" />
  </svg>
);

const LayerManager = () => (
  <div className="absolute left-[255px] top-[138px] flex w-[767px] h-[306px] rounded-sm bg-[#4b4b4b] border border-[#3a3a3a]">
    {/* Palette caption */}
    <div className="flex flex-col items-center w-[26px] shrink-0 pt-1.5">
      <button aria-label="关闭"><Svg w={10} h={10}><path d="M1.500 1.500l7 7M8.500 1.500l-7 7" stroke="#c0c0c0" strokeWidth="2" /></Svg></button>
      <button aria-label="自动隐藏" className="mt-2"><Svg w={9} h={10}><path d="M1 0v10M8 1v8" stroke="#bbb" strokeWidth="1.500" /><path d="M7 1v8L3 5z" fill="#bbb" /></Svg></button>
      <button aria-label="特性" className="mt-2"><Gear size={11} /></button>
      <span className="mt-auto mb-2 text-[15px] leading-4 text-[#b5b5b5] [writing-mode:vertical-rl] [text-orientation:sideways] rotate-180">图层特性管理器</span>
      <Svg w={16} h={16} className="mb-1"><path d="M1 14h9l4-4M1 11h9l5-4M1 8h8l6-5H6z" stroke="#c8c8c8" strokeWidth="1.200" /></Svg>
    </div>

    {/* Content */}
    <div className="flex flex-col flex-1 min-w-0 my-0.5 mr-0.5 pl-0.5 pr-[3px] rounded border border-[#333] bg-[#5c5c5c]">
      <div className="flex items-start justify-between pt-[7px] pl-1">
        <span className="pt-[5px] leading-4">当前图层: 粗实线</span>
        <label className="flex items-center w-[125px] h-4 bg-[#666]">
          <input aria-label="搜索图层" placeholder="搜索图层" className="flex-1 min-w-0 bg-transparent outline-none placeholder:text-[#a5a5a5]" />
          <Svg w={13} h={13} className="mr-px"><path d="M7 7l5 5" stroke="#ccc" strokeWidth="2.500" /><circle cx="5" cy="4.500" r="4" fill="#dfe6f2" stroke="#333" /></Svg>
        </label>
      </div>
      <div className="flex items-center h-5 mt-[3px] pl-1">
        <button aria-label="新建特性过滤器"><Svg w={14} h={12}><path d="M0 1h5l1 1h7v10H0z" fill="#bbb" stroke="#444" strokeWidth=".6" /><path d="M4 5h6L7 9z" fill="#333" /></Svg></button>
        <button aria-label="新建组过滤器" className="ml-[9px]"><Svg w={14} h={12}><path d="M0 1h5l1 1h7v10H0z" fill="#bbb" stroke="#444" strokeWidth=".6" /></Svg></button>
        <span className="ml-2 w-px h-4 bg-[#3a3a3a]" />
        <button aria-label="图层状态管理器" className="ml-2"><Svg w={16} h={14}><path d="M0 10h9l3-3M0 6h9l3-4H4z" fill="#aaa" stroke="#ddd" /><rect x="9.500" y="4.500" width="6" height="9" fill="#fff" stroke="#333" /><path d="M11 6h3v2h-3z" fill="#3a6fb5" /></Svg></button>
        <button aria-label="新建图层" className="ml-3.5"><Svg w={16} h={14}><path d="M0 13h8l4-4M0 10h8l4-4M0 6h8l4-5H4z" stroke="#ddd" /><circle cx="12.500" cy="7" r="3" fill="#ff8a1e" /><circle cx="12.500" cy="7" r="1.200" fill="#fff060" /></Svg></button>
        <button aria-label="冻结图层" className="ml-[7px]"><Svg w={16} h={14}><path d="M0 13h8l4-4M0 10h8l4-4M0 6h8l4-5H4z" stroke="#ddd" /><path d="M12 3v8M8.500 5l7 4M8.500 9l7-4" stroke="#8fd0ea" strokeWidth="1.500" /></Svg></button>
        <button aria-label="删除图层" className="ml-[7px]"><Svg w={16} h={14}><path d="M0 13h8l4-4M0 10h8l4-4M0 6h8l4-5H4z" stroke="#ddd" /><path d="M9 4l6 6M15 4L9 10" stroke="#f02020" strokeWidth="2.300" /></Svg></button>
        <button aria-label="置为当前" className="ml-[7px]"><Svg w={16} h={14}><path d="M0 13h8l4-4M0 10h8l4-4M0 6h8l4-5H4z" stroke="#ddd" /><path d="M7 5l3 3 6-7" stroke="#3db51e" strokeWidth="2.500" /></Svg></button>
        <button aria-label="刷新" className="ml-auto"><Svg w={12} h={12}><path d="M1 5a5 5 0 0 1 9-2M11 7a5 5 0 0 1-9 2" stroke="#ccc" strokeWidth="1.800" /><path d="M11.500 0v5h-5zM.5 12V7h5z" fill="#ccc" /></Svg></button>
        <button aria-label="设置" className="ml-2.5 mr-2"><Gear /></button>
      </div>

      <div className="flex gap-[3px] mt-1.5 h-[207px]">
        <div className="flex flex-col items-center justify-between w-5 shrink-0 pt-1 pb-2 border border-[#6b6b6b]">
          <ChevronPair />
          <ChevronPair />
        </div>
        <div className="flex flex-col flex-1 min-w-0">
          <div className="flex-1 overflow-hidden">
            <table className="w-full table-fixed border-collapse whitespace-nowrap">
              <thead>
                <tr className="h-[23px] bg-[#676767] text-left">
                  {columns.map((c, i) => (
                    <th key={c.title} className={clsx(c.width, "font-normal overflow-hidden pl-[5px] border-r border-[#505050] last:border-r-0")}>
                      {i === 1
                        ? <span className="flex items-center justify-between pr-0.5">{c.title}<Svg w={9} h={5}><path d="M0 5h9L4.500 0z" fill="#999" /></Svg></span>
                        : c.title}
                    </th>
                  ))}
                </tr>
              </thead>
              <tbody className="[&_td>svg]:block">
                {layers.map((layer) => <LayerRow key={layer.name} layer={layer} />)}
                <tr className="h-11"><td /><td className="border-r-2 border-[#4c4c4c]" /><td colSpan={11} /></tr>
              </tbody>
            </table>
          </div>
          <div className="flex items-center h-[17px] shrink-0 bg-[#f0f0f0]">
            <button aria-label="向左" className="w-[17px] flex justify-center"><Svg w={6} h={8}><path d="M5 0L1 4l4 4" stroke="#444" strokeWidth="1.800" /></Svg></button>
            <span className="w-[497px] h-[15px] bg-[#cdcdcd]" />
            <button aria-label="向右" className="w-[17px] flex justify-center ml-auto"><Svg w={6} h={8}><path d="M1 0l4 4-4 4" stroke="#444" strokeWidth="1.800" /></Svg></button>
          </div>
        </div>
      </div>

      <div className="flex items-center gap-[9px] mt-2">
        <button aria-label="过滤器" className="flex items-center justify-center gap-1 w-[30px] h-[22px] rounded-sm border border-[#c5c5c5] bg-[#555]">
          <Svg><path d="M1 15V6l4-3h9v8l-5 4z" fill="#7fb0d8" stroke="#cde" /><path d="M4 14l8-10" stroke="#d8ecfa" strokeWidth="2" /><path d="M12 3l-4 6h3l-2 6 6-8h-3l2-4z" fill="#ffd83c" stroke="#8a6a10" strokeWidth=".5" /></Svg>
          <Svg w={7} h={4}><path d="M0 0h7L3.500 4z" fill="#111" /></Svg>
        </button>
        <span>全部: 显示了 7 个图层，共 7 个图层</span>
      </div>
    </div>

    {/* Callouts round the on/freeze cells */}
    <div className="absolute left-[173px] top-[81px] w-[78px] h-[55px] border-[3px] border-[#f83838]" />
    <div className="absolute left-[176px] top-[153px] w-[75px] h-[67px] border-[3px] border-[#f83838]" />
  </div>
);

/* ---------- Status bar ---------- */

const Cell = ({ children, label }: { children: ReactNode, label: string }) => (
  <button aria-label={label} className="w-6 h-full flex items-center justify-center">{children}</button>
);
const ArrowCell = () => <button aria-label="更多" className="w-[15px] h-full flex items-center justify-center"><Caret /></button>;
const Group = ({ children, className }: { children: ReactNode, className?: string }) => (
  <div className={clsx("flex items-center h-[26px] border border-[#7a7a7a] bg-[#4d4d4d] shrink-0", className)}>{children}</div>
);
const Line = () => <span className="w-px h-full bg-[#7a7a7a]" />;

const LayoutTab = ({ label, active }: { label: string, active?: boolean }) => (
  <button className={clsx(
    "h-[18px] w-[52px] rounded-b-lg leading-4",
    active ? "bg-linear-to-b from-[#626262] to-[#8a8a8a] font-bold" : "bg-linear-to-b from-[#444] to-[#5f5f5f] text-[#b5b5b5]",
  )}>{label}</button>
);

const personPath = "M8 0l2 7 5.500 8.500L9.500 12h-3L.5 15.500 6 7z";

const StatusBar = () => (
  <footer className="flex items-start h-7 shrink-0 bg-[#3a3a3a] border-t border-[#5f5f5f] text-white">
    <div className="flex pl-2">
      <LayoutTab label="模型" active />
      <LayoutTab label="布局1" />
      <LayoutTab label="布局2" />
      <button aria-label="新建布局" className="ml-[7px] h-4 w-[22px] flex items-center justify-center bg-[#4d4d4d] rounded-bl rounded-br-lg">
        <Svg w={8} h={8}><path d="M4 0v8M0 4h8" stroke="#ccc" strokeWidth="2" /></Svg>
      </button>
    </div>
    <div className="flex ml-auto gap-px">
      <Group className="w-[182px] justify-end pr-1.5">136.0101, 231.1598, 0.0000</Group>
      <Group className="w-[29px] justify-center font-bold whitespace-nowrap">模型</Group>
      <Group>
        <Cell label="栅格"><Svg><path d="M2.500 1v14M6.500 1v14M10.500 1v14M14.500 1v14" stroke="#ccc" /><path d="M0 3.500h16M0 7.500h16M0 11.500h16" stroke="#ccc" strokeDasharray="1 1" /></Svg></Cell>
        <Cell label="捕捉"><Svg><path d="M1 1.500h14M1 4.500h14M1 7.500h14M1 10.500h14M1 13.500h14" stroke="#ccc" strokeDasharray="1 2" /></Svg></Cell>
        <ArrowCell />
      </Group>
      <Group>
        <Cell label="动态输入"><Svg><path d="M4 1v8M0 5h8" stroke="#2d92ff" strokeWidth="1.500" /><rect x="6" y="10" width="10" height="4" rx="1" fill="#2d92ff" /></Svg></Cell>
        <Line />
        <Cell label="正交"><Svg><path d="M2.500 2v12.500H15M2.500 10.500h4v4" stroke="#ccc" /></Svg></Cell>
        <Cell label="极轴"><Svg><circle cx="7.500" cy="8" r="6.500" stroke="#2d92ff" strokeWidth="1.500" /><path d="M7 8h9M7 8l6-6" stroke="#2d92ff" strokeWidth="1.300" /></Svg></Cell>
        <ArrowCell />
        <Cell label="等轴测"><Svg w={18} h={18}><path d="M9 0v18M1 1l16 16" stroke="#aaa" strokeWidth="1.300" /></Svg></Cell>
        <ArrowCell />
        <Line />
        <Cell label="对象捕捉追踪"><Svg><path d="M0 14.500h16M1 14L13 2" stroke="#2d92ff" strokeWidth="1.500" /><path d="M7 5v4h4" stroke="#2d92ff" /></Svg></Cell>
        <Cell label="对象捕捉"><Svg><path d="M2.500 2.500h12v12h-12z" stroke="#2d92ff" strokeWidth="1.500" /><rect x="0" y="0" width="5" height="5" fill="#030" /><rect x="1" y="1" width="3" height="3" fill="#00e020" /></Svg></Cell>
        <ArrowCell />
        <Line />
        <Cell label="线宽"><Svg><path d="M0 2h16M0 9h16" stroke="#2d92ff" strokeWidth="2" /><path d="M0 5.500h9M0 13.500h16" stroke="#2d92ff" strokeWidth="3" /></Svg></Cell>
      </Group>
      <Group>
        <Cell label="注释可见性"><Svg><path d={personPath} fill="#2d92ff" stroke="#2d92ff" /><circle cx="12" cy="4" r="3" fill="#2a4a70" stroke="#2d92ff" /></Svg></Cell>
        <Cell label="自动缩放"><Svg><path d={personPath} fill="#b8b8b8" /><path d="M13 1l-3 4h3l-2 4" stroke="#d0d0d0" /></Svg></Cell>
        <Cell label="注释比例"><Svg><path d={personPath} fill="#b8b8b8" /></Svg></Cell>
        <button className="flex items-center justify-center gap-1 w-[33px]">1:1<Caret /></button>
      </Group>
      <Group>
        <Cell label="切换工作空间"><Gear size={13} /></Cell>
        <ArrowCell />
        <Line />
        <Cell label="注释监视器"><Svg><path d="M8 1v14M1 8h14" stroke="#c8c8c8" strokeWidth="2" /></Svg></Cell>
      </Group>
      <Group><Cell label="快捷特性"><Svg w={10} h={12}><rect x="1" y="1" width="8" height="10" stroke="#ccc" /><path d="M2 3.500h6M3 6h1M5 6h3M3 8.500h1M5 8.500h3" stroke="#ccc" /></Svg></Cell></Group>
      <Group><Cell label="隔离对象"><Svg><path d="M1.500 1.500h6v6h-6zM6 10l3.500 5h-7z" stroke="#bbb" strokeWidth="1.300" /><circle cx="12" cy="7" r="3" stroke="#bbb" strokeWidth="1.300" /></Svg></Cell></Group>
      <Group><Cell label="硬件加速"><Svg w={18} h={18}><circle cx="9" cy="9" r="7.500" fill="#0d5596" stroke="#1e80e0" /><path d="M9 11l4-3" stroke="#4ab0ff" strokeWidth="1.300" /></Svg></Cell></Group>
      <Group>
        <Cell label="性能"><Svg w={20} h={18}><rect x="1" y="2" width="17" height="14" fill="#eee" stroke="#222" /><path d="M2 14q3 0 4.500-6t4 0 4 6" stroke="#222" strokeWidth="1.300" /><path d="M15.500 10l4 7h-8z" fill="#f06a1e" /></Svg></Cell>
        <Cell label="打印完成"><Svg><path d="M4 1h6l3 3v6H4z" fill="#7fb0e0" stroke="#d5e5f5" /><path d="M1 9h9v5H1z" fill="#f3d33a" /><path d="M0 1l5 4M5 1L0 5" stroke="#fff" /><path d="M7 11l3 3 5-6" stroke="#5cc92e" strokeWidth="2.200" /></Svg></Cell>
      </Group>
      <Group>
        <Cell label="全屏显示"><Svg><rect x=".5" y="2.500" width="15" height="11" stroke="#ccc" /><path d="M9 4.500h4v4M13 4.500L9.500 8M7 11.500H3v-4M3 11.500L6.500 8" stroke="#ccc" strokeWidth="1.300" /></Svg></Cell>
        <Cell label="自定义"><Svg><path d="M0 3h16M0 8h16M0 13h16" stroke="#ccc" strokeWidth="2" /></Svg></Cell>
      </Group>
    </div>
  </footer>
);

const Tooltip = () => (
  <div role="tooltip" className="absolute left-[616px] top-[154px] w-[134px] h-[111px] bg-[#f1f2f8] border border-[#767676] text-[#4a4a4a] leading-4 whitespace-nowrap">
    <div className="pl-[7px] pt-2 font-medium">图层特性</div>
    <div className="pl-[7px] pt-[7px]">管理图层和图层特性</div>
    <div className="mx-px mt-2 h-px bg-[#b5b5b5]" />
    <div className="flex items-center gap-1 pl-[7px] pt-1.5 font-bold">
      <Svg><path d="M.5 1h13v11H.5z" fill="#f4f19a" stroke="#8a8a6a" /><path d="M0 1h14" stroke="#1838c8" strokeWidth="2" /><path d="M2 9h14v6H2z" fill="#111" /><path d="M5 11h3M10 13h4" stroke="#fff" /></Svg>
      LAYER
    </div>
    <div className="pl-[7px] pt-2 font-bold">按 F1 键获得更多帮助</div>
  </div>
);

const App = () => (
  <div className="relative flex flex-col h-screen overflow-hidden bg-[#8a9bb0] pb-0.5 text-white text-[12px] font-['Open_Sans','Noto_Sans_CJK_SC',sans-serif]">
    <Header />
    <RibbonTabs />
    <Ribbon />
    <FileTabs />
    <main className="flex flex-1 min-h-0 bg-[#5d5d5d]">
      <SnapToolbar />
      <div className="relative flex-1 bg-black overflow-hidden">
        <Drawing />
        <p className="relative pl-[3px] pt-1.5 leading-4">[−][俯视][二维线框]</p>
        <NavBar />
        <CommandLine />
        <LayerManager />
      </div>
      <aside className="w-[26px] shrink-0 pl-[3px] pt-1 pb-[5px] bg-[#5d5d5d]">
        <div className="flex flex-col items-center h-full w-[22px] border border-[#333] bg-linear-to-r from-[#929292] to-[#606060]">
          <Svg w={10} h={4} className="mt-0.5"><path d="M0 .5h10M0 2.500h10" stroke="#222" strokeDasharray="1 1" /></Svg>
          <span className="mt-auto mb-auto text-[15px] leading-5 [writing-mode:vertical-rl] [text-orientation:sideways] rotate-180">特性</span>
        </div>
      </aside>
    </main>
    <StatusBar />
    <Tooltip />
    {/* Callout round the layer properties button */}
    <div className="absolute left-[585px] top-[63px] w-[62px] h-[84px] rounded-[50%] border-[3px] border-[#f23a3a] pointer-events-none" />
  </div>
);

export default App;
